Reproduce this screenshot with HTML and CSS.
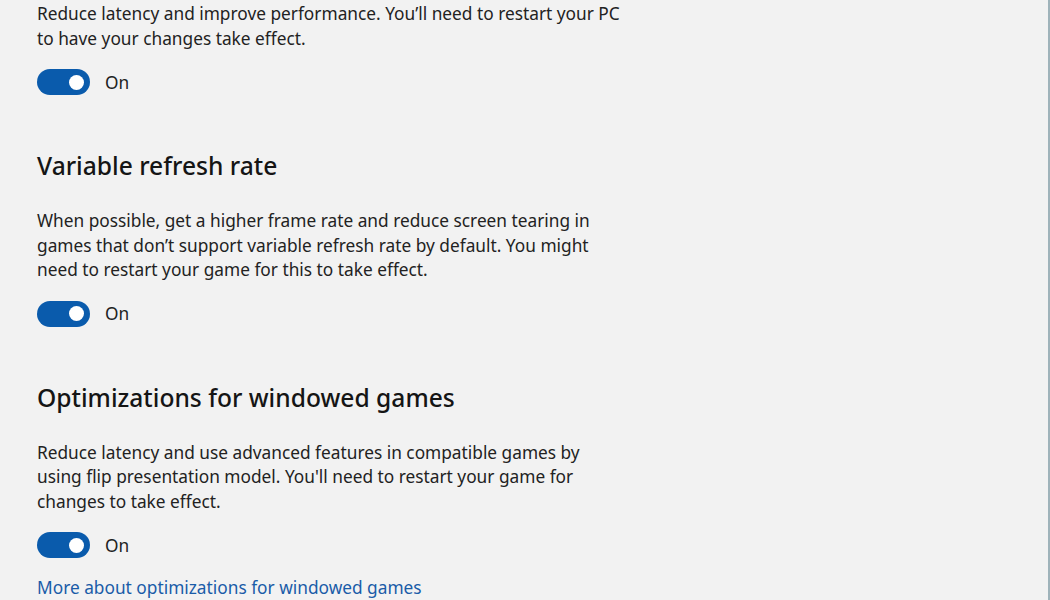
FILE: index.html
```html
<!DOCTYPE html>
<html lang="en">
<head>
<meta charset="utf-8">
<title>Graphics settings</title>
<link rel="stylesheet" href="styles.css">
</head>
<body>
<main class="page">
  <section class="setting first">
    <p class="desc">Reduce latency and improve performance. You’ll need to restart your PC<br>to have your changes take effect.</p>
    <div class="toggle-row">
      <span class="toggle"><span class="knob"></span></span>
      <span class="state">On</span>
    </div>
  </section>
  <section class="setting">
    <h2 class="title">Variable refresh rate</h2>
    <p class="desc">When possible, get a higher frame rate and reduce screen tearing in<br>games that don’t support variable refresh rate by default. You might<br>need to restart your game for this to take effect.</p>
    <div class="toggle-row">
      <span class="toggle"><span class="knob"></span></span>
      <span class="state">On</span>
    </div>
  </section>
  <section class="setting">
    <h2 class="title">Optimizations for windowed games</h2>
    <p class="desc">Reduce latency and use advanced features in compatible games by<br>using flip presentation model. You'll need to restart your game for<br>changes to take effect.</p>
    <div class="toggle-row">
      <span class="toggle"><span class="knob"></span></span>
      <span class="state">On</span>
    </div>
    <a class="more" href="#">More about optimizations for windowed games</a>
  </section>
</main>
</body>
</html>
```
FILE: styles.css
```css
html, body {
  margin: 0;
  height: 100%;
}
body {
  background: #f2f2f2;
  font-family: "Noto Sans", "Open Sans", sans-serif;
  color: #1b1b1b;
  overflow: hidden;
}
.page {
  box-sizing: border-box;
  height: 600px;
  padding: 2px 0 0 37px;
  border-right: 2px solid #9fb3ba;
}
.setting {
  display: flex;
  flex-direction: column;
  align-items: flex-start;
}
.setting + .setting {
  margin-top: 55px;
}
.title {
  margin: 0;
  font-size: 24.6px;
  line-height: 32px;
  font-weight: 500;
  color: #151515;
}
.desc {
  margin: 27px 0 0;
  font-size: 17.3px;
  line-height: 24.5px;
  color: #222;
}
.first .desc {
  margin-top: 0;
}
.toggle-row {
  display: flex;
  align-items: center;
  gap: 15px;
  margin-top: 18px;
  height: 26px;
}
.toggle {
  box-sizing: border-box;
  width: 53px;
  height: 26px;
  border-radius: 13px;
  background: #0a5bac;
  display: flex;
  align-items: center;
  justify-content: flex-end;
  padding-right: 6px;
}
.knob {
  width: 15px;
  height: 15px;
  border-radius: 50%;
  background: #fff;
}
.state {
  font-size: 17.3px;
  color: #222;
}
.more {
  margin-top: 18px;
  font-size: 17.3px;
  line-height: 24px;
  color: #1a5ca8;
  text-decoration: none;
}
```
